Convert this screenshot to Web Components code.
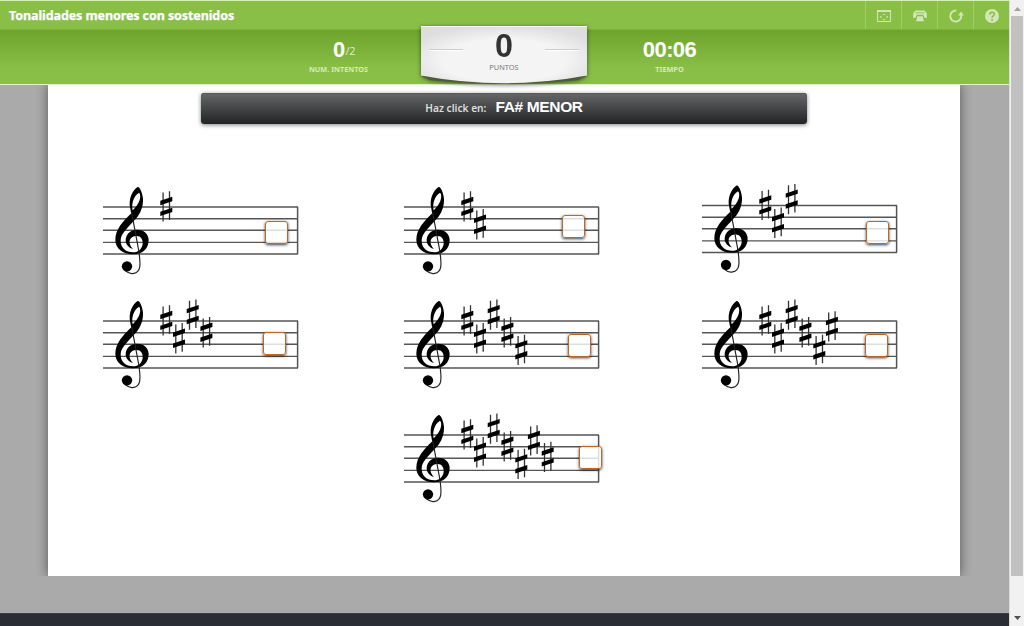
<!DOCTYPE html>
<html lang="es">
<head>
<meta charset="utf-8">
<title>Tonalidades menores con sostenidos</title>
<style>
    html, body {
        margin: 0;
        height: 100%;
        overflow: hidden;
    }
    body {
        background: #aaa;
        font-family: "Noto Sans", "Open Sans", sans-serif;
    }
</style>
</head>
<body>
<activity-page>
    <title-bar slot="header" heading="Tonalidades menores con sostenidos">
        <tool-button icon="fullscreen"></tool-button>
        <tool-button icon="print"></tool-button>
        <tool-button icon="restart"></tool-button>
        <tool-button icon="help"></tool-button>
    </title-bar>
    <score-bar slot="header">
        <score-item label="NUM. INTENTOS">0<small slot="extra">/2</small></score-item>
        <score-badge label="PUNTOS">0</score-badge>
        <score-item label="TIEMPO">00:06</score-item>
    </score-bar>
    <click-prompt label="Haz click en:">FA# MENOR</click-prompt>
    <staff-grid>
        <key-staff sharps="1" box-x="162" box-y="39"></key-staff>
        <key-staff sharps="2" box-x="158" box-y="33"></key-staff>
        <key-staff sharps="3" box-x="164" box-y="39" lift="1.5"></key-staff>
        <key-staff sharps="4" box-x="160" box-y="36"></key-staff>
        <key-staff sharps="5" box-x="164" box-y="38"></key-staff>
        <key-staff sharps="6" box-x="163" box-y="38"></key-staff>
        <key-staff class="last" sharps="7" box-x="175" box-y="36"></key-staff>
    </staff-grid>
</activity-page>

<script>
class ActivityPage extends HTMLElement {
    constructor() {
        super();
        this.attachShadow({ mode: "open" });
        this.shadowRoot.innerHTML = `
            <style>
                :host {
                    display: flex;
                    height: 626px;
                }
                .page {
                    flex: 1;
                    display: flex;
                    flex-direction: column;
                }
                .stage {
                    flex: 1;
                    padding: 0 49px 37px 48px;
                    overflow: hidden;
                    display: flex;
                }
                .board {
                    flex: 1;
                    background: #fff;
                    box-shadow: 0 0 11px rgba(0, 0, 0, .5);
                    clip-path: inset(0 -12px);
                    padding-top: 9px;
                    box-sizing: border-box;
                }
                footer {
                    height: 12px;
                    background: #2b2d36;
                    border-top: 1px solid #3c3d44;
                }
                .scroll {
                    width: 15px;
                    box-sizing: border-box;
                    background: #f1f1f1;
                    border-left: 1px solid #dcdcdc;
                    display: flex;
                    flex-direction: column;
                    align-items: center;
                }
                .thumb {
                    width: 12px;
                    height: 560px;
                    background: #c1c1c1;
                }
                .scroll svg {
                    display: block;
                    width: 13px;
                    height: 16px;
                }
                .scroll svg:last-child {
                    margin-top: auto;
                }
            </style>
            <div class="page">
                <slot name="header"></slot>
                <div class="stage"><div class="board"><slot></slot></div></div>
                <footer></footer>
            </div>
            <div class="scroll">
                <svg viewBox="0 0 13 16"><path d="M3 11L6.5 7L10 11Z" fill="#a0a0a0"/></svg>
                <div class="thumb"></div>
                <svg viewBox="0 0 13 16"><path d="M3 6L6.5 10L10 6Z" fill="#505050"/></svg>
            </div>
        `;
    }
}

class TitleBar extends HTMLElement {
    constructor() {
        super();
        this.attachShadow({ mode: "open" });
        this.shadowRoot.innerHTML = `
            <style>
                :host {
                    display: flex;
                    height: 30px;
                    box-sizing: border-box;
                    border-top: 1px solid #d8f0b4;
                    border-bottom: 1px solid #7fb33d;
                    background: #89bf47;
                    color: #fff;
                }
                h1 {
                    flex: 1;
                    margin: 0;
                    padding-left: 9px;
                    font-size: 12.5px;
                    line-height: 29px;
                    font-weight: 700;
                    letter-spacing: -.09px;
                    -webkit-text-stroke: .25px #fff;
                    white-space: nowrap;
                }
            </style>
            <h1></h1>
            <slot></slot>
        `;
        this.shadowRoot.querySelector("h1").textContent = this.getAttribute("heading");
    }
}

const ICONS = {
    fullscreen: `<path d="M1.5 2.5h13v11h-13z" fill="none" stroke="currentColor" stroke-width="1"/>
        <path d="M1 2h14v2H1z M8 5.4l1.5 1.6h-3z M8 12.6l1.5-1.6h-3z M3.6 9l1.8-1.5v3z M12.4 9l-1.8-1.5v3z"/>`,
    print: `<path d="M3.6 2.6h8.8l2.4 2.4v5h-2.2l-1.4-3.2H4.8L3.4 10H1.2V5z"/>
        <path d="M5.4 8.2h5.2l1.3 5H4.1z"/><path d="M3.4 4.8h9.2" stroke="#89bf47" stroke-width=".8"/>`,
    restart: `<path d="M8.3 2.6A5.5 5.5 0 1 0 13.2 7.2" fill="none" stroke="currentColor" stroke-width="1.9"/>
        <path d="M10 7.4L13.1 3.6L15.8 7.4z"/>`,
    help: `<circle cx="8" cy="8" r="7"/>
        <path d="M5.8 6.5C5.8 3.4 10.4 3.5 10.3 6.3C10.3 8 8.1 8 8.1 9.8" fill="none" stroke="#89bf47" stroke-width="1.6"/>
        <circle cx="8.1" cy="11.9" r="1" fill="#89bf47"/>`
};

class ToolButton extends HTMLElement {
    constructor() {
        super();
        this.attachShadow({ mode: "open" });
        this.shadowRoot.innerHTML = `
            <style>
                :host {
                    display: flex;
                    width: 36px;
                    box-sizing: border-box;
                    border-left: 1px solid #9fcf64;
                    align-items: center;
                    justify-content: center;
                    color: #d2e7b8;
                }
                svg {
                    width: 16px;
                    height: 16px;
                    margin-top: 2px;
                }
            </style>
            <svg viewBox="0 0 16 16" fill="currentColor">${ICONS[this.getAttribute("icon")]}</svg>
        `;
    }
}

class ScoreBar extends HTMLElement {
    constructor() {
        super();
        this.attachShadow({ mode: "open" });
        this.shadowRoot.innerHTML = `
            <style>
                :host {
                    display: grid;
                    grid-template-columns: 165px 166px 165px;
                    justify-content: center;
                    height: 54px;
                    padding-right: 1px;
                    background: linear-gradient(#6ea42c, #89bf47 38px);
                    box-shadow: 0 1px 0 #e4f2d0;
                    position: relative;
                    z-index: 1;
                }
            </style>
            <slot></slot>
        `;
    }
}

class ScoreItem extends HTMLElement {
    constructor() {
        super();
        this.attachShadow({ mode: "open" });
        this.shadowRoot.innerHTML = `
            <style>
                :host {
                    display: block;
                    text-align: center;
                    color: #fff;
                    padding-top: 8px;
                }
                .value {
                    font: bold 22px/24px "Liberation Sans", Arial, sans-serif;
                    letter-spacing: -.6px;
                }
                ::slotted(small) {
                    font: 11px/12px "Open Sans", sans-serif;
                    letter-spacing: -.4px;
                    color: #dcedc8;
                    margin: 0 -11px 0 1px;
                    position: relative;
                    top: -2px;
                }
                .label {
                    font-size: 7.3px;
                    font-weight: 700;
                    line-height: 10px;
                    margin-top: 2px;
                    color: #d6eabc;
                }
            </style>
            <div class="value"><slot></slot><slot name="extra"></slot></div>
            <div class="label">${this.getAttribute("label")}</div>
        `;
    }
}

class ScoreBadge extends HTMLElement {
    constructor() {
        super();
        this.attachShadow({ mode: "open" });
        this.shadowRoot.innerHTML = `
            <style>
                :host {
                    display: block;
                    position: relative;
                    height: 59px;
                    margin-top: -4px;
                    text-align: center;
                }
                svg {
                    position: absolute;
                    left: 0;
                    top: 0;
                    overflow: visible;
                    filter: drop-shadow(0 1px 2px rgba(0, 0, 0, .55));
                }
                .value {
                    position: relative;
                    font: bold 34px/34px "Liberation Sans", Arial, sans-serif;
                    transform: scaleX(.95);
                    color: #333;
                    padding-top: 2px;
                }
                .label {
                    position: relative;
                    font-size: 7.4px;
                    line-height: 10px;
                    color: #777;
                }
            </style>
            <svg width="166" height="59" viewBox="0 0 166 59">
                <defs>
                    <radialGradient id="face" cx=".5" cy=".6" r=".62">
                        <stop offset=".6" stop-color="#f4f4f4"/>
                        <stop offset="1" stop-color="#dedede"/>
                    </radialGradient>
                </defs>
                <path d="M1 50H165L157 54Q83 62 9 54Z" fill="#4d5a3c"/>
                <path d="M1 0H165Q166 0 166 1V49.5Q83 65 0 49.5V1Q0 0 1 0Z" fill="url(#face)"/>
                <path d="M0 .5H166" stroke="#fff"/>
                <path d="M8 23.5H42M124 23.5H158" stroke="#ccc"/>
                <path d="M8 24.5H42M124 24.5H158" stroke="#fff"/>
            </svg>
            <div class="value"><slot></slot></div>
            <div class="label">${this.getAttribute("label")}</div>
        `;
    }
}

class ClickPrompt extends HTMLElement {
    constructor() {
        super();
        this.attachShadow({ mode: "open" });
        this.shadowRoot.innerHTML = `
            <style>
                :host {
                    display: flex;
                    justify-content: center;
                    align-items: baseline;
                    gap: 9px;
                    width: 606px;
                    height: 31px;
                    margin-left: 153px;
                    border-radius: 3px;
                    box-sizing: border-box;
                    background: linear-gradient(#666769, #222325);
                    box-shadow: 0 1px 4px rgba(0, 0, 0, .5), inset 0 1px 0 #58595b;
                    color: #fff;
                    font: bold 15.5px/28px "Liberation Sans", Arial, sans-serif;
                    letter-spacing: -.35px;
                }
                span {
                    font: 600 10.2px "Noto Sans", sans-serif;
                    letter-spacing: 0;
                    color: #ddd;
                }
            </style>
            <span>${this.getAttribute("label")}</span><div><slot></slot></div>
        `;
    }
}

class StaffGrid extends HTMLElement {
    constructor() {
        super();
        this.attachShadow({ mode: "open" });
        this.shadowRoot.innerHTML = `
            <style>
                :host {
                    display: grid;
                    grid-template-columns: 301px 298px 200px;
                    grid-auto-rows: 114px;
                    padding: 58px 0 0 55px;
                }
                ::slotted(.last) {
                    grid-column: 2;
                }
            </style>
            <slot></slot>
        `;
    }
}

// centre of every sharp, in key signature order
const SHARPS = [[63.3, 24.6], [76, 42.4], [89.7, 18.7], [103.4, 36.4], [117.3, 54], [129.9, 30.6], [143.7, 47.1]];
const LINES = [25, 36.8, 48.3, 60.4, 72];

class KeyStaff extends HTMLElement {
    constructor() {
        super();
        this.attachShadow({ mode: "open" });

        const count = Number(this.getAttribute("sharps"));
        const lift = Number(this.getAttribute("lift") || 0);
        const lines = LINES.map(y => `M0 ${y}H195`).join("");
        const sharps = SHARPS.slice(0, count).map(([x, y]) => `
            <g transform="translate(${x} ${y})">
                <path d="M-3.2 -14V15M3.2 -15.3V13.3" stroke="#333" stroke-width="1.3"/>
                <path d="M-6 -5L6 -9V-4.6L-6 -.6ZM-6 5.9L6 1.9V6.3L-6 10.3Z" transform="translate(0 -.8)"/>
            </g>`).join("");

        this.shadowRoot.innerHTML = `
            <style>
                :host {
                    display: block;
                    position: relative;
                    width: 196px;
                    height: 100px;
                }
                svg {
                    display: block;
                    overflow: visible;
                    transform: translateY(${-lift}px);
                    filter: blur(.5px);
                }
                button {
                    position: absolute;
                    left: ${this.getAttribute("box-x")}px;
                    top: ${this.getAttribute("box-y")}px;
                    width: 23px;
                    height: 23px;
                    padding: 0;
                    border: 1px solid #b8682a;
                    border-radius: 3px;
                    background: rgba(255, 255, 255, .8);
                    box-shadow: 0 1px 3px rgba(0, 0, 0, .75);
                }
            </style>
            <svg width="196" height="100" viewBox="0 0 196 100" fill="#000">
                <path d="${lines}" stroke="#555" stroke-width="1.4"/>
                <path d="M194.6 25V72" stroke="#555" stroke-width="1.5"/>
                <g transform="translate(-3 -2) scale(.3333)">
                    <path fill-rule="evenodd" d="M114 20C97 30 84 58 91 86C92 93 93 97 94 100C69 124 46 148 46 180C46 206 70 224 100 223C129 223 146 205 146 180C146 160 130 149 112 149C91 149 77 163 77 181C77 195 88 205 99 207C91 198 87 190 89 182C92 172 101 168 110 168C122 168 129 178 128 191C126 207 115 217 100 217C77 217 61 203 62 180C63 160 84 143 106 118C124 98 130 76 129 56C127 38 121 24 114 20ZM117 38C123 44 121 58 115 69C110 78 104 85 98 91C94 72 100 48 117 38Z"/>
                    <path d="M95 98L115 205C119 228 122 245 119 262C115 283 90 286 76 272" fill="none" stroke="#222" stroke-width="3.5"/>
                    <circle cx="81" cy="259" r="15.5"/>
                </g>
                ${sharps}
            </svg>
            <button type="button"></button>
        `;
    }
}

customElements.define("activity-page", ActivityPage);
customElements.define("title-bar", TitleBar);
customElements.define("tool-button", ToolButton);
customElements.define("score-bar", ScoreBar);
customElements.define("score-item", ScoreItem);
customElements.define("score-badge", ScoreBadge);
customElements.define("click-prompt", ClickPrompt);
customElements.define("staff-grid", StaffGrid);
customElements.define("key-staff", KeyStaff);
</script>
</body>
</html>
